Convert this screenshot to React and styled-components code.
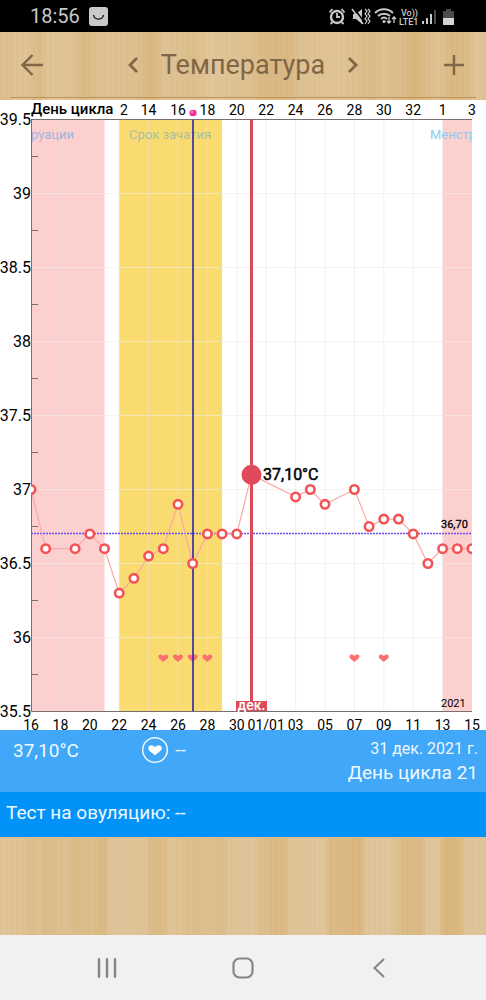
import React from 'react';

import { useState } from 'react';
import styled, { createGlobalStyle } from 'styled-components';

const GlobalStyle = createGlobalStyle`
    * {
        box-sizing: border-box;
    }

    body {
        margin: 0;
        background: #dfc294;
        font-family: Roboto, "Noto Sans", sans-serif;
    }

    button {
        display: flex;
        align-items: center;
        justify-content: center;
        padding: 0;
        border: none;
        background: none;
        color: inherit;
        font: inherit;
        cursor: pointer;
    }
`

const grain = `repeating-linear-gradient(90deg, rgba(190, 140, 70, 0.07) 0 1px, transparent 2px 5px, rgba(190, 140, 70, 0.05) 6px 7px, transparent 8px 11px)`;

const Page = styled.div`
    display: flex;
    flex-direction: column;
    min-height: 100vh;
`

const StatusBar = styled.div`
    display: flex;
    align-items: center;
    justify-content: space-between;
    height: 32px;
    padding: 0 30px;
    background: #000000;
    color: #c9c9c9;
`

const StatusGroup = styled.div`
    display: flex;
    align-items: center;
    gap: 9px;
`

const Clock = styled.span`
    font-size: 20px;
    line-height: 32px;
`

const Header = styled.header`
    display: grid;
    grid-template-columns: 64px 1fr 64px;
    align-items: center;
    height: 68px;
    padding-bottom: 3px;
    position: relative;
    color: #7f6646;
    background:
        ${grain},
        linear-gradient(90deg,
            #dcbe8e 0%, #e0c498 5%, #dabb88 8%, #e0c599 10%, #dfc397 15%, #dabb86 17%, #dfc294 21%,
            #ddbf90 28%, #d9b782 31%, #dfc396 34%, #dcbe8c 40%, #e1c69b 43%, #dec192 51%, #dab885 55%,
            #dab985 60%, #dec294 62%, #e0c497 70%, #dbbc88 77%, #dec294 79%, #dabb88 83%, #d8b47d 85%,
            #dfc396 90%, #dab882 93%, #dcbc87 96%, #e0c498 98%, #dfc294 100%);

    &::after {
        content: '';
        position: absolute;
        left: 10px;
        right: 10px;
        bottom: 2px;
        height: 1px;
        background: #c1935c;
    }
`

const HeaderButton = styled.button`
    width: 64px;
    height: 48px;
`

const Pager = styled.div`
    display: flex;
    align-items: center;
    justify-content: center;
    gap: 10px;
`

const PagerButton = styled.button`
    width: 36px;
    height: 48px;
`

const Title = styled.h1`
    margin: 0;
    font-size: 27px;
    line-height: 36px;
    font-weight: 400;
`

const ChartArea = styled.main`
    background: #ffffff;
`

const ChartSvg = styled.svg`
    display: block;
    width: 100%;
    height: auto;
    font-family: Roboto, "Noto Sans", sans-serif;
`

const DayPanel = styled.section`
    display: grid;
    grid-template-columns: 1fr 1fr 2fr;
    align-items: start;
    padding: 6px 8px 6px 13px;
    height: 62px;
    background: #41a7f8;
    color: #eef9ff;
`

const Temperature = styled.span`
    font-size: 19px;
    line-height: 30px;
`

const Intimacy = styled.button`
    && {
        justify-content: flex-start;
        gap: 6px;
        padding-left: 12px;
    }
    font-size: 19px;
    line-height: 26px;
`

const DayInfo = styled.div`
    display: flex;
    flex-direction: column;
    align-items: flex-end;
`

const DayDate = styled.span`
    font-size: 16px;
    line-height: 26px;
`

const DayCycle = styled.span`
    font-size: 19px;
    line-height: 22px;
`

const OvulationPanel = styled.section`
    padding: 0 6px;
    height: 45px;
    background: #0392f8;
    color: #eef9ff;
    font-size: 19px;
    line-height: 41px;
`

const Wood = styled.div`
    flex: 1;
    min-height: 48px;
    border-top: 1px solid #e0bd86;
    background:
        ${grain},
        linear-gradient(90deg,
            #e0c498 0%, #dfc295 5%, #dabd8c 7%, #dfc296 8%, #dabd8a 9%, #dfc294 14%, #dbbc87 15%, #dcbe8d 17%,
            #ddbf8c 19%, #dab984 21.5%, #e0c499 22.5%, #dfc397 30%, #dbbc89 30.8%, #dcbb86 33.5%, #e0c498 35%,
            #dcbe8c 40%, #dec18f 42%, #dabd8b 46%, #dfc497 47%, #e0c49a 52%, #dcbf8f 54%, #dbba89 56%,
            #dab985 58.5%, #dfc397 59.5%, #e1c59b 66.5%, #dbbb87 68%, #dab783 74.2%, #dfc498 75.4%, #e0c69d 80%,
            #dbbb88 83%, #dbb986 86.6%, #e0c69d 87.8%, #e0c69b 90.2%, #dab57c 91.5%, #dcb983 94.8%, #dfc59c 95.8%,
            #dfc59c 100%);
`

const NavBar = styled.nav`
    display: flex;
    align-items: center;
    justify-content: center;
    gap: 76px;
    height: 65px;
    background: #f1f1f1;
    color: #858585;
`

const NavButton = styled.button`
    width: 60px;
    height: 48px;
`

// chart geometry
const LEFT = 31;
const RIGHT = 472;
const TOP = 19.5;
const BOTTOM = 611.5;
const DAY = 14.7;

const dayX = (day) => LEFT + day * DAY;
const tempY = (temp) => TOP + (39.5 - temp) * 148;

// [days since 16 dec, temperature]
const points = [
    [0, 37], [1, 36.6], [3, 36.6], [4, 36.7], [5, 36.6], [6, 36.3], [7, 36.4], [8, 36.55], [9, 36.6],
    [10, 36.9], [11, 36.5], [12, 36.7], [13, 36.7], [14, 36.7], [15, 37.1], [18, 36.95], [19, 37],
    [20, 36.9], [22, 37], [23, 36.75], [24, 36.8], [25, 36.8], [26, 36.7], [27, 36.5], [28, 36.6],
    [29, 36.6], [30, 36.6],
];

const hearts = [9, 10, 11, 12, 22, 24];
const cycleDays = ['14', '16', '18', '20', '22', '24', '26', '28', '30', '32', '1', '3'];
const dates = ['16', '18', '20', '22', '24', '26', '28', '30', '01/01', '03', '05', '07', '09', '11', '13', '15'];
const degrees = [39.5, 39, 38.5, 38, 37.5, 37, 36.5, 36, 35.5];
const selectedDay = 15;

const heartPath = 'M0 4 C-2 2 -5 1 -5 -1.4 C-5 -4 -1.6 -4.4 0 -2 C1.6 -4.4 5 -4 5 -1.4 C5 1 2 2 0 4 Z';

function TemperatureChart() {
    return (
        <ChartSvg viewBox="0 0 486 630" role="img" aria-label="Температура">
            <defs>
                <clipPath id="plot">
                    <rect x={LEFT} y={TOP} width={RIGHT - LEFT} height={BOTTOM - TOP} />
                </clipPath>
            </defs>

            <g clipPath="url(#plot)">
                <rect x={LEFT} y={TOP} width={dayX(5) - LEFT} height={592} fill="#fdd0d0" />
                <rect x={dayX(6)} y={TOP} width={DAY * 7} height={592} fill="#fadb70" />
                <rect x={dayX(28)} y={TOP} width={DAY * 2} height={592} fill="#fdd0d0" />

                {dates.map((date, i) => (
                    <path key={date} d={`M${dayX(i * 2)} ${TOP}V${BOTTOM}`} stroke="#e8e4e0" strokeOpacity="0.5" />
                ))}
                {degrees.map((degree) => (
                    <path key={degree} d={`M${LEFT} ${tempY(degree)}H${RIGHT}`} stroke="#f1ede6" strokeOpacity="0.6" />
                ))}

                <g fontSize="13">
                    <text x="74" y="39" textAnchor="end" fill="#a3b4dc">Менструации</text>
                    <text x="129" y="39" fill="#a8bfa0">Срок зачатия</text>
                    <text x="430" y="39" fill="#8fcbee">Менструации</text>
                </g>
            </g>

            <path d={`M${LEFT + 0.5} ${TOP}V${BOTTOM}H${RIGHT}M${LEFT} ${TOP}H${RIGHT}`} fill="none" stroke="#77706e" />
            {degrees.slice(1).map((degree) => (
                <path key={degree} d={`M${LEFT} ${tempY(degree + 0.25)}h7`} stroke="#77706e" />
            ))}

            <path d={`M${LEFT} 433.5H${RIGHT}`} stroke="#6a4cf0" strokeWidth="1.4" strokeDasharray="2 1" />

            <g clipPath="url(#plot)">
                {hearts.map((day) => (
                    <path key={day} d={heartPath} transform={`translate(${dayX(day)} 558)`} fill="#f9706f" />
                ))}
                <path d={`M193 ${TOP}V${BOTTOM}`} stroke="#2f22a6" strokeWidth="1.6" />
                <path d={`M${dayX(selectedDay)} ${TOP}V${BOTTOM}`} stroke="#dd4a58" strokeWidth="3" />
                <polyline
                    points={points.map(([day, temp]) => `${dayX(day)},${tempY(temp)}`).join(' ')}
                    fill="none"
                    stroke="#fba7a9"
                    strokeWidth="1.2"
                />
                {points.map(([day, temp]) => (
                    <circle key={day} cx={dayX(day)} cy={tempY(temp)} r="4.2" fill="#ffffff" stroke="#f35355" strokeWidth="2.6" />
                ))}
            </g>

            <circle cx={dayX(selectedDay)} cy={tempY(37.1)} r="10" fill="#e04b5b" />
            <text x="263" y="380" fontSize="16" stroke="#000000" strokeWidth="0.5">37,10°C</text>
            <text x="441" y="428" fontSize="11" stroke="#000000" strokeWidth="0.3">36,70</text>
            <text x="441" y="607" fontSize="11">2021</text>

            <rect x="236" y="601" width="31" height="10" fill="#dd4a58" />
            <text x={dayX(selectedDay)} y="610" fontSize="14" fontWeight="500" fill="#ffffff" textAnchor="middle">дек.</text>

            <g fontSize="16" textAnchor="end">
                {degrees.map((degree) => (
                    <text key={degree} x="31" y={tempY(degree) + 5.5}>{degree}</text>
                ))}
            </g>

            <g fontSize="14" textAnchor="middle">
                <text x="124" y="15">2</text>
                {cycleDays.map((day, i) => (
                    <text key={day} x={dayX(8 + i * 2)} y="15">{day}</text>
                ))}
                {dates.map((date, i) => (
                    <text key={date} x={dayX(i * 2)} y="630">{date}</text>
                ))}
            </g>
            <text x="31" y="14" fontSize="15" fontWeight="500">День цикла</text>

            <ellipse cx="193" cy="13" rx="3.6" ry="3.2" fill="#f32c9c" />
            <circle cx="192" cy="12" r="1.3" fill="#fb86c8" />
        </ChartSvg>
    )
}

function StatusIcons() {
    return (
        <svg width="128" height="20" viewBox="0 0 128 20" fill="none" stroke="#c9c9c9" strokeWidth="1.8">
            <circle cx="9" cy="11" r="6" strokeWidth="2.4" />
            <path d="M9 7v4h3M1.5 6.5l3-3.5M16.5 6.5l-3-3.5M4.5 16l-2 2M13.5 16l2 2" />
            <path d="M25 8h3l6-5v15l-6-5h-3z" fill="#c9c9c9" stroke="none" />
            <path d="M25 1l12 16" stroke="#000000" strokeWidth="1.4" />
            <path d="M24 3l11 15" strokeWidth="1.5" />
            <path d="M37 3l2 2-2 3 2 2-2 3 2 2-2 3M40 3l2 2-2 3 2 2-2 3 2 2-2 3" strokeWidth="1.2" />
            <path d="M47 7c5-5 13-5 18 0M50 10c3-3 9-3 12 0M53 13c2-2 4-2 6 0" />
            <circle cx="56" cy="15.5" r="1.5" fill="#c9c9c9" stroke="none" />
            <path d="M61 11v6M59 15l2 2 2-2M66 17v-6M64 13l2-2 2 2" strokeWidth="1.3" />
            <g fill="#c9c9c9" stroke="none" fontSize="9" fontWeight="500" fontFamily="Roboto, sans-serif">
                <text x="73" y="10">Vo))</text>
                <text x="71" y="19">LTE1</text>
            </g>
            <path d="M95 18v-3M99 18v-6M103 18V8" strokeWidth="2" />
            <path d="M107 18V4" stroke="#4b4b4b" strokeWidth="2" />
            <path d="M115 5h3V3h5v2h3v7h-11z" fill="#4b4b4b" stroke="none" />
            <path d="M115 12h11v7h-11z" fill="#d5d5d5" stroke="none" />
        </svg>
    )
}

function App() {
    const [title] = useState('Температура');

    return (
        <>
        <GlobalStyle />
        <Page>
            <StatusBar>
                <StatusGroup>
                    <Clock>18:56</Clock>
                    <svg width="19" height="19" viewBox="0 0 19 19">
                        <rect width="19" height="19" rx="3" fill="#c9c9c9" />
                        <path d="M4.5 8c1 5.5 9 5.5 10 0" fill="none" stroke="#111111" strokeWidth="1.3" />
                    </svg>
                </StatusGroup>
                <StatusIcons />
            </StatusBar>
            <Header>
                <HeaderButton aria-label="Назад">
                    <svg width="24" height="24" viewBox="0 0 24 24" fill="none" stroke="currentColor" strokeWidth="2.4">
                        <path d="M23 12H3M12.5 2L2.5 12l10 10" />
                    </svg>
                </HeaderButton>
                <Pager>
                    <PagerButton aria-label="Предыдущий">
                        <svg width="12" height="18" viewBox="0 0 12 18" fill="none" stroke="currentColor" strokeWidth="2.8">
                            <path d="M10 2L3 9l7 7" />
                        </svg>
                    </PagerButton>
                    <Title>{title}</Title>
                    <PagerButton aria-label="Следующий">
                        <svg width="12" height="18" viewBox="0 0 12 18" fill="none" stroke="currentColor" strokeWidth="2.8">
                            <path d="M2 2l7 7-7 7" />
                        </svg>
                    </PagerButton>
                </Pager>
                <HeaderButton aria-label="Добавить">
                    <svg width="20" height="20" viewBox="0 0 20 20" fill="none" stroke="currentColor" strokeWidth="2.4">
                        <path d="M10 0v20M0 10h20" />
                    </svg>
                </HeaderButton>
            </Header>
            <ChartArea>
                <TemperatureChart />
            </ChartArea>
            <DayPanel>
                <Temperature>37,10°C</Temperature>
                <Intimacy>
                    <svg width="28" height="28" viewBox="-14 -14 28 28">
                        <circle r="12.3" fill="none" stroke="#eef9ff" strokeWidth="1.5" />
                        <path d={heartPath} transform="scale(1.35)" fill="#ffffff" />
                    </svg>
                    --
                </Intimacy>
                <DayInfo>
                    <DayDate>31 дек. 2021 г.</DayDate>
                    <DayCycle>День цикла 21</DayCycle>
                </DayInfo>
            </DayPanel>
            <OvulationPanel>Тест на овуляцию: --</OvulationPanel>
            <Wood />
            <NavBar>
                <NavButton aria-label="Недавние">
                    <svg width="20" height="20" viewBox="0 0 20 20" stroke="currentColor" strokeWidth="2.4" strokeLinecap="round">
                        <path d="M2 1.2v17.6M10 1.2v17.6M18 1.2v17.6" />
                    </svg>
                </NavButton>
                <NavButton aria-label="Главный экран">
                    <svg width="22" height="22" viewBox="0 0 22 22" fill="none" stroke="currentColor" strokeWidth="2.2">
                        <rect x="1.5" y="1.5" width="19" height="19" rx="6" />
                    </svg>
                </NavButton>
                <NavButton aria-label="Назад">
                    <svg width="12" height="20" viewBox="0 0 12 20" fill="none" stroke="currentColor" strokeWidth="2">
                        <path d="M11 1L1.5 10l9.5 9" />
                    </svg>
                </NavButton>
            </NavBar>
        </Page>
        </>
    )
}

export default App;
